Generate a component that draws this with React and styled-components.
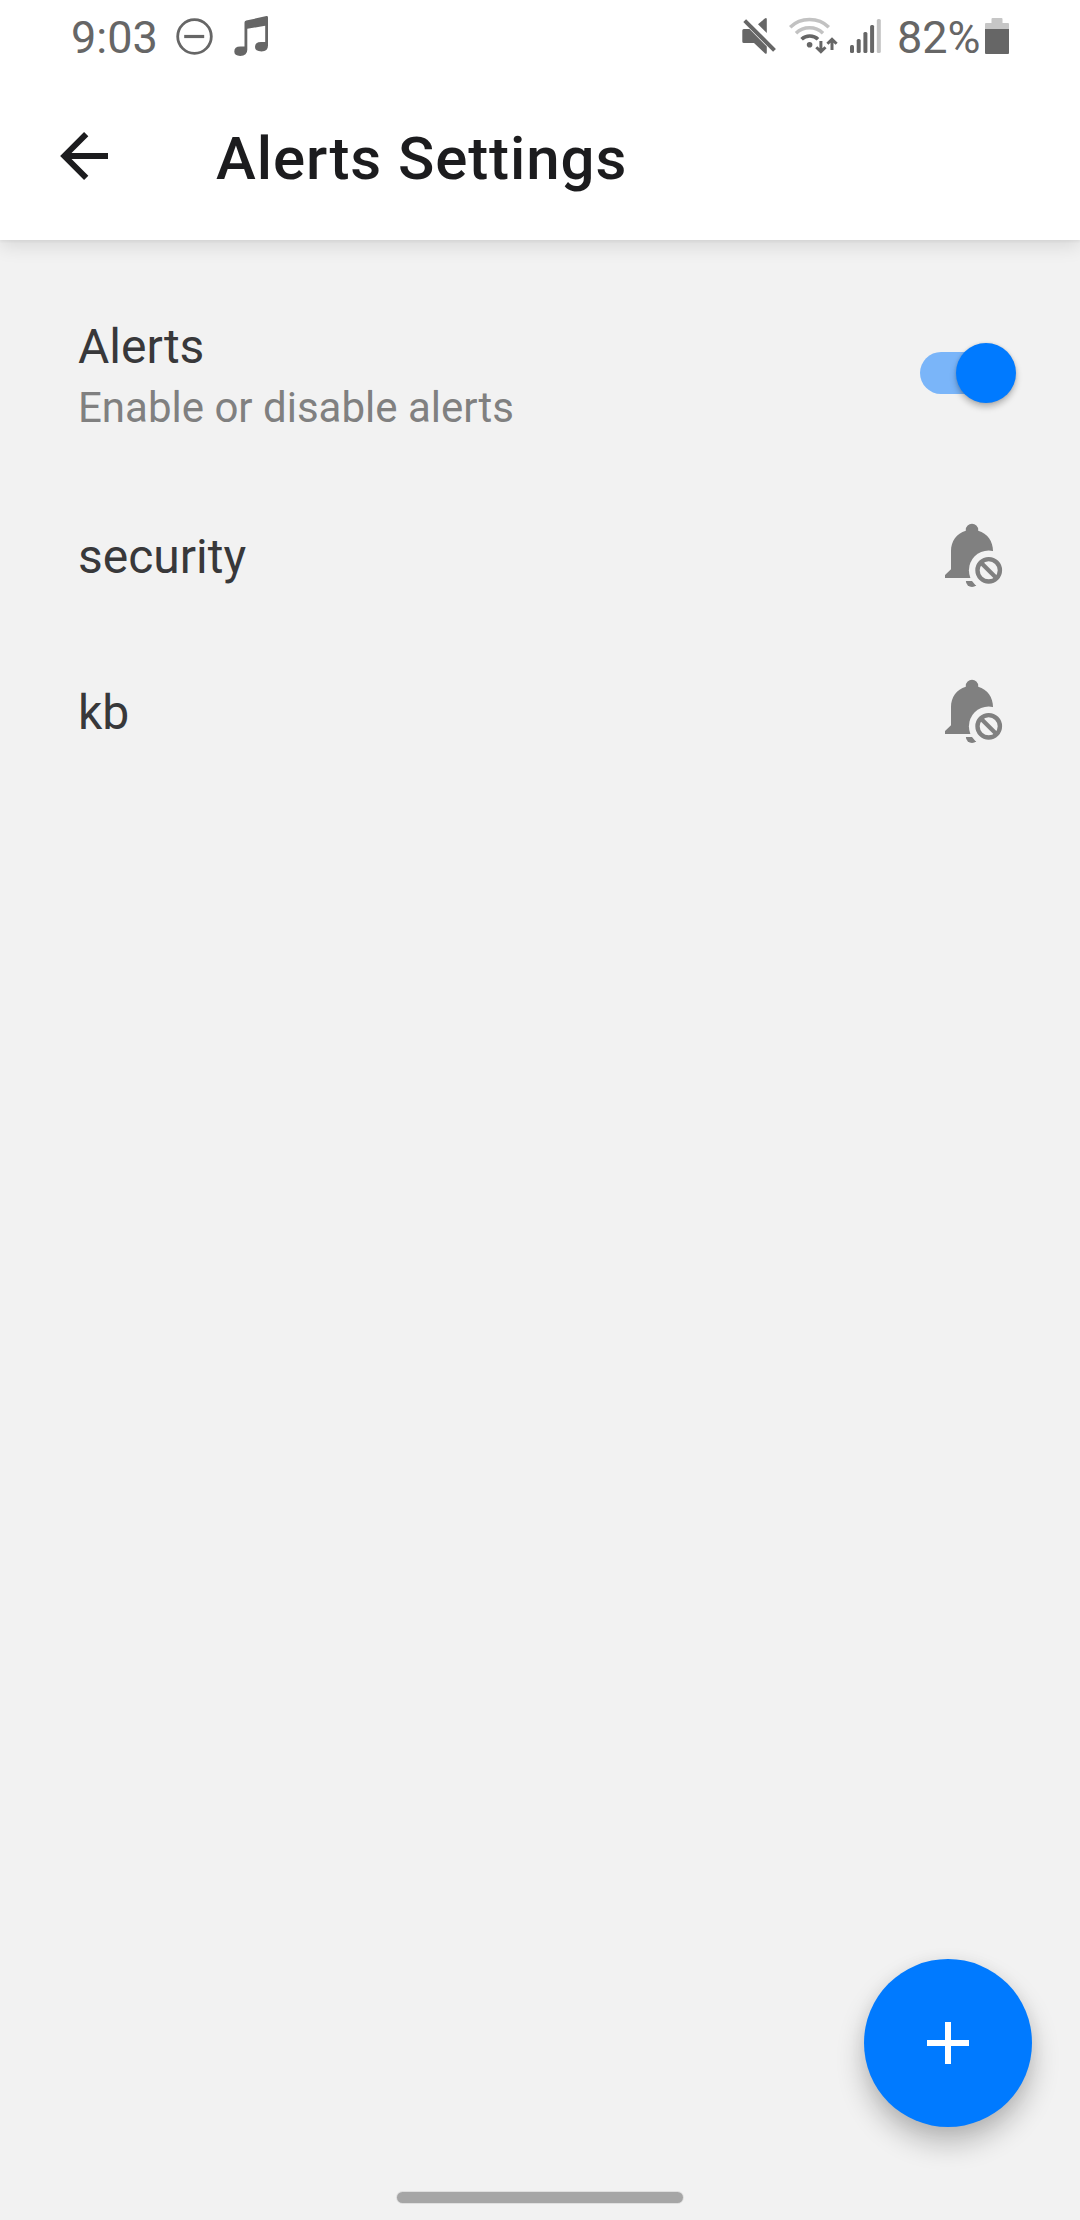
import React from "react";
import styled, { createGlobalStyle } from "styled-components";

const GlobalStyle = createGlobalStyle`
  * { box-sizing: border-box; }
  body {
    margin: 0;
    background: #f2f2f2;
    font-family: Roboto, "Noto Sans", sans-serif;
  }
`;

const Screen = styled.div`
  width: 1080px;
  height: 2220px;
  display: flex;
  flex-direction: column;
  background: #f2f2f2;
  overflow: hidden;
`;

const Top = styled.header`
  flex: none;
  height: 240px;
  background: #fff;
  box-shadow: 0 2px 2px rgba(0, 0, 0, 0.04), 0 6px 18px rgba(0, 0, 0, 0.11);
`;

const StatusBar = styled.div`
  height: 72px;
  padding: 0 71px;
  display: flex;
  align-items: center;
  justify-content: space-between;
  color: #666;
`;

const StatusGroup = styled.div`
  display: flex;
  align-items: center;
  gap: ${(p) => p.$gap}px;
`;

const StatusText = styled.span`
  width: 84px;
  font-size: 45px;
  line-height: 72px;
  padding-top: 3px;
  white-space: nowrap;
`;

const Glyph = styled.svg`
  display: block;
  flex: none;
  overflow: visible;
`;

const AppBar = styled.div`
  height: 168px;
  padding: 0 48px;
  display: flex;
  align-items: center;
  gap: 96px;
`;

const IconButton = styled.button`
  width: 72px;
  height: 72px;
  padding: 0;
  border: 0;
  background: none;
  color: #1c1c1e;
`;

const Title = styled.h1`
  margin: 0;
  padding-top: 5px;
  color: #1c1c1e;
  font-size: 60px;
  font-weight: 500;
  line-height: 72px;
  letter-spacing: 0.9px;
`;

const List = styled.main`
  flex: 1;
  padding-top: 27px;
`;

const Row = styled.div`
  height: ${(p) => (p.$tall ? 212 : 156)}px;
  padding: 0 ${(p) => (p.$tall ? 64 : 76)}px 0 78px;
  display: flex;
  align-items: center;
  justify-content: space-between;
`;

const Label = styled.div`
  color: #38383a;
  font-size: 48px;
  line-height: 62px;
`;

const Hint = styled.div`
  padding-top: 2px;
  color: #808080;
  font-size: 42px;
  line-height: 56px;
`;

const Copy = styled.div`
  padding-top: 5px;
`;

const Track = styled.div`
  width: 96px;
  height: 60px;
  display: flex;
  align-items: center;
  justify-content: flex-end;
`;

const Rail = styled.div`
  width: 84px;
  height: 42px;
  margin-right: -48px;
  border-radius: 21px;
  background: #7ab5f9;
`;

const Thumb = styled.div`
  width: 60px;
  height: 60px;
  border-radius: 50%;
  background: #007aff;
  box-shadow: 0 4px 6px rgba(0, 0, 0, 0.26), 0 0 3px rgba(0, 0, 0, 0.12);
  z-index: 1;
`;

const BellSlot = styled.div`
  padding-bottom: 4px;
`;

const Footer = styled.footer`
  flex: none;
  display: flex;
  flex-direction: column;
  align-items: center;
  padding-bottom: 17px;
  gap: 65px;
`;

const AddButton = styled.button`
  align-self: flex-end;
  width: 168px;
  height: 168px;
  margin-right: 48px;
  padding: 0;
  display: flex;
  align-items: center;
  justify-content: center;
  border: 0;
  border-radius: 50%;
  background: #007aff;
  color: #fff;
  box-shadow: 0 16px 28px rgba(0, 0, 0, 0.24), 0 2px 16px rgba(0, 0, 0, 0.06);
`;

const HomeHandle = styled.div`
  width: 286px;
  height: 11px;
  border-radius: 6px;
  background: #a6a6a6;
  box-shadow: 0 0 0 1px #dfdfdf;
`;

const DoNotDisturb = () => (
  <Glyph width="37" height="37" viewBox="0 0 37 37" fill="none" stroke="currentColor">
    <circle cx="18.5" cy="18.5" r="16.8" strokeWidth="2.8" />
    <path d="M8.2 18.5h20" strokeWidth="3.2" />
  </Glyph>
);

const MusicNote = () => (
  <Glyph width="35" height="40" viewBox="0 0 35 40" fill="currentColor">
    <path d="M10.5 6.5Q10.5 4.8 12.2 4.5L32.5 0.1Q34 0 34 1.4V29.5Q34 35.4 27.5 35.4Q21 35.4 21 31Q21 26 27 26H31.2V9.8L13.3 12.8V33.8Q13.3 39.9 6.2 39.9Q0.3 39.9 0.3 35.5Q0.3 30.6 6.2 30.6H10.5Z" />
  </Glyph>
);

const Muted = () => (
  <Glyph width="34" height="37" viewBox="0 0 34 37" fill="currentColor">
    <path d="M16 6.3L22.5.7Q24.8-.8 24.8 1.6V15.1Z" />
    <path d="M1.8 11H7.5L24.8 28.5V34.3Q24.8 36.8 22.8 35.2L12 25.1H1.8Q.3 25.1.3 23.6V12.5Q.3 11 1.8 11Z" />
    <path d="M2.7 2.6L32.5 32.4" fill="none" stroke="currentColor" strokeWidth="4" />
  </Glyph>
);

const Wifi = () => (
  <Glyph width="48" height="36" viewBox="0 0 48 36" fill="none" stroke="currentColor">
    <path d="M1.2 9.2C11.5-1.1 29.5-1.1 39.8 9.2M7 15.2C14.5 8 26.5 8 34 15.2" stroke="#c2c2c2" strokeWidth="3.5" />
    <path d="M12.6 21.2C17 16.9 24.6 16.9 29 21.2" strokeWidth="3.6" />
    <circle cx="20.6" cy="26.7" r="2.8" fill="currentColor" stroke="none" />
    <path d="M31.9 23V33M27.3 29.2L31.9 33.7L36.5 29.2M43 32V22M38.4 25.8L43 21.3L47.6 25.8" strokeWidth="3" />
  </Glyph>
);

const Signal = () => (
  <Glyph width="34" height="34" viewBox="0 0 34 34" fill="currentColor">
    <rect x="0" y="26" width="4" height="8" rx="1.5" />
    <rect x="6.7" y="20" width="4" height="14" rx="1.5" />
    <rect x="13.4" y="13" width="4" height="21" rx="1.5" />
    <rect x="20.1" y="6" width="4" height="28" rx="1.5" />
    <rect x="26.8" y="0" width="4" height="34" rx="1.5" fill="#c2c2c2" />
  </Glyph>
);

const Battery = () => (
  <Glyph width="24" height="36" viewBox="0 0 24 36">
    <path d="M7.5 0H16.5Q17.5 0 17.5 1V5H23Q24 5 24 6V11H0V6Q0 5 1 5H6.5V1Q6.5 0 7.5 0Z" fill="#c6c6c6" />
    <path d="M0 11H24V35Q24 36 23 36H1Q0 36 0 35Z" fill="currentColor" />
  </Glyph>
);

const BackArrow = () => (
  <Glyph width="72" height="72" viewBox="0 0 72 72" fill="none" stroke="currentColor" strokeWidth="6">
    <path d="M60 36H17M38.2 14.2L16.4 36L38.2 57.8" />
  </Glyph>
);

const BellOff = () => (
  <Glyph width="60" height="66" viewBox="0 0 60 66" fill="#808080">
    <mask id="bell-cutout" maskUnits="userSpaceOnUse" x="0" y="0" width="60" height="66">
      <rect width="60" height="66" fill="#fff" />
      <circle cx="44.7" cy="48.3" r="19.8" fill="#000" />
    </mask>
    <g mask="url(#bell-cutout)">
      <path d="M1 56V53L7 47.3V29C7 19.5 12.5 11.2 21.8 8.7V8A6.2 6.2 0 0 1 34.2 8V8.7C43.5 11.2 49 19.5 49 29V56Z" />
      <path d="M21.9 59H34.1A6.1 6.1 0 0 1 21.9 59Z" />
    </g>
    <circle cx="44.7" cy="48.3" r="11.2" fill="none" stroke="#808080" strokeWidth="4.4" />
    <path d="M36.8 40.4L52.6 56.2" stroke="#808080" strokeWidth="4.2" />
  </Glyph>
);

const Plus = () => (
  <Glyph width="42" height="42" viewBox="0 0 42 42" fill="none" stroke="currentColor" strokeWidth="6">
    <path d="M21 0V42M0 21H42" />
  </Glyph>
);

const Toggle = () => (
  <Track role="switch" aria-checked="true">
    <Rail />
    <Thumb />
  </Track>
);

const alerts = ["security", "kb"];

export default function App() {
  return (
    <Screen>
      <GlobalStyle />
      <Top>
        <StatusBar>
          <StatusGroup $gap={21}>
            <StatusText>9:03</StatusText>
            <DoNotDisturb />
            <MusicNote />
          </StatusGroup>
          <StatusGroup $gap={13}>
            <Muted />
            <Wifi />
            <Signal />
            <StatusGroup $gap={4}>
              <StatusText>82%</StatusText>
              <Battery />
            </StatusGroup>
          </StatusGroup>
        </StatusBar>
        <AppBar>
          <IconButton aria-label="Back">
            <BackArrow />
          </IconButton>
          <Title>Alerts Settings</Title>
        </AppBar>
      </Top>
      <List>
        <Row $tall>
          <Copy>
            <Label>Alerts</Label>
            <Hint>Enable or disable alerts</Hint>
          </Copy>
          <Toggle />
        </Row>
        {alerts.map((name) => (
          <Row key={name}>
            <Label>{name}</Label>
            <BellSlot>
              <BellOff />
            </BellSlot>
          </Row>
        ))}
      </List>
      <Footer>
        <AddButton aria-label="Add">
          <Plus />
        </AddButton>
        <HomeHandle />
      </Footer>
    </Screen>
  );
}
